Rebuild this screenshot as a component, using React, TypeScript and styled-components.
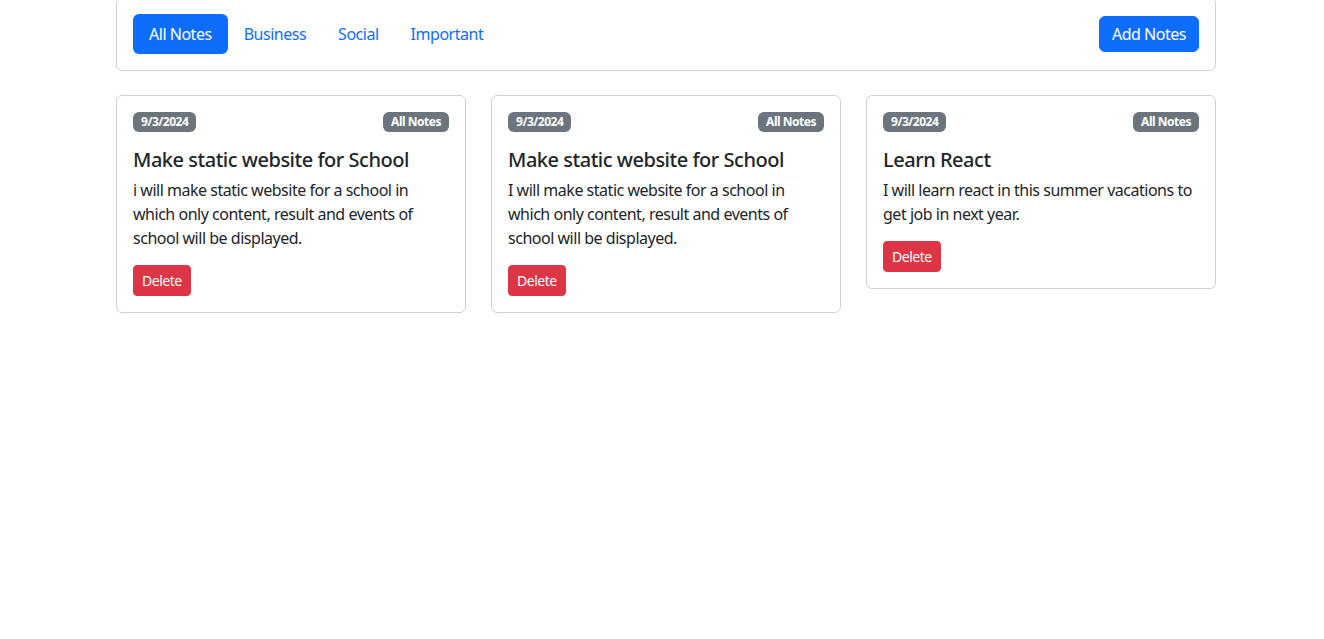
import React from "react";
import styled, { createGlobalStyle } from "styled-components";

const GlobalStyle = createGlobalStyle`
  *, *::before, *::after { box-sizing: border-box; }
  html, body { margin: 0; padding: 0; background: #fff; }
  body {
    font-family: "Segoe UI", "Noto Sans", "Liberation Sans", sans-serif;
    font-size: 16px;
    line-height: 1.5;
    letter-spacing: -0.03em;
    color: #212529;
  }
`;

const Page = styled.div`
  padding-left: 8px;
  margin-top: -3px;
`;

const Container = styled.div`
  width: 1100px;
  margin: 0 auto;
`;

const Toolbar = styled.nav`
  display: flex;
  align-items: center;
  justify-content: space-between;
  padding: 16px;
  border: 1px solid rgba(0, 0, 0, 0.175);
  border-radius: 6px;
`;

const Pills = styled.ul`
  display: flex;
  list-style: none;
  margin: 0;
  padding: 0;
`;

const Pill = styled.a<{ $active?: boolean }>`
  display: block;
  padding: 8px 16px;
  font-size: 16px;
  line-height: 24px;
  border-radius: 6px;
  text-decoration: none;
  cursor: pointer;
  color: ${(p) => (p.$active ? "#fff" : "#0d6efd")};
  background: ${(p) => (p.$active ? "#0d6efd" : "transparent")};
`;

const Button = styled.button<{ $variant: "primary" | "danger"; $small?: boolean }>`
  font-family: inherit;
  letter-spacing: inherit;
  border: 1px solid ${(p) => (p.$variant === "primary" ? "#0d6efd" : "#dc3545")};
  background: ${(p) => (p.$variant === "primary" ? "#0d6efd" : "#dc3545")};
  color: #fff;
  font-size: ${(p) => (p.$small ? "14px" : "16px")};
  line-height: ${(p) => (p.$small ? "21px" : "24px")};
  padding: ${(p) => (p.$small ? "4px 8px" : "5px 12px")};
  border-radius: ${(p) => (p.$small ? "4px" : "6px")};
  cursor: pointer;
`;

const CardRow = styled.div`
  display: flex;
  align-items: flex-start;
  gap: 25px;
  margin-top: 24px;
`;

const Card = styled.div`
  width: 350px;
  padding: 16px;
  border: 1px solid rgba(0, 0, 0, 0.175);
  border-radius: 6px;
`;

const CardHeader = styled.div`
  display: flex;
  justify-content: space-between;
  align-items: center;
`;

const Badge = styled.span`
  display: inline-block;
  background: #6c757d;
  color: #fff;
  font-size: 12px;
  font-weight: 700;
  line-height: 1;
  padding: 4px 8px;
  border-radius: 6px;
`;

const Title = styled.h5`
  margin: 16px 0 6px;
  font-size: 20px;
  font-weight: 500;
  line-height: 1.2;
`;

const Text = styled.p`
  margin: 0 0 15px;
`;

const notes = [
  {
    date: "9/3/2024",
    tag: "All Notes",
    title: "Make static website for School",
    text: "i will make static website for a school in which only content, result and events of school will be displayed.",
  },
  {
    date: "9/3/2024",
    tag: "All Notes",
    title: "Make static website for School",
    text: "I will make static website for a school in which only content, result and events of school will be displayed.",
  },
  {
    date: "9/3/2024",
    tag: "All Notes",
    title: "Learn React",
    text: "I will learn react in this summer vacations to get job in next year.",
  },
];

export default function App() {
  return (
    <>
      <GlobalStyle />
      <Page>
        <Container>
          <Toolbar>
            <Pills>
              <li><Pill $active>All Notes</Pill></li>
              <li><Pill>Business</Pill></li>
              <li><Pill>Social</Pill></li>
              <li><Pill>Important</Pill></li>
            </Pills>
            <Button $variant="primary">Add Notes</Button>
          </Toolbar>
          <CardRow>
            {notes.map((n, i) => (
              <Card key={i}>
                <CardHeader>
                  <Badge>{n.date}</Badge>
                  <Badge>{n.tag}</Badge>
                </CardHeader>
                <Title>{n.title}</Title>
                <Text>{n.text}</Text>
                <Button $variant="danger" $small>Delete</Button>
              </Card>
            ))}
          </CardRow>
        </Container>
      </Page>
    </>
  );
}
